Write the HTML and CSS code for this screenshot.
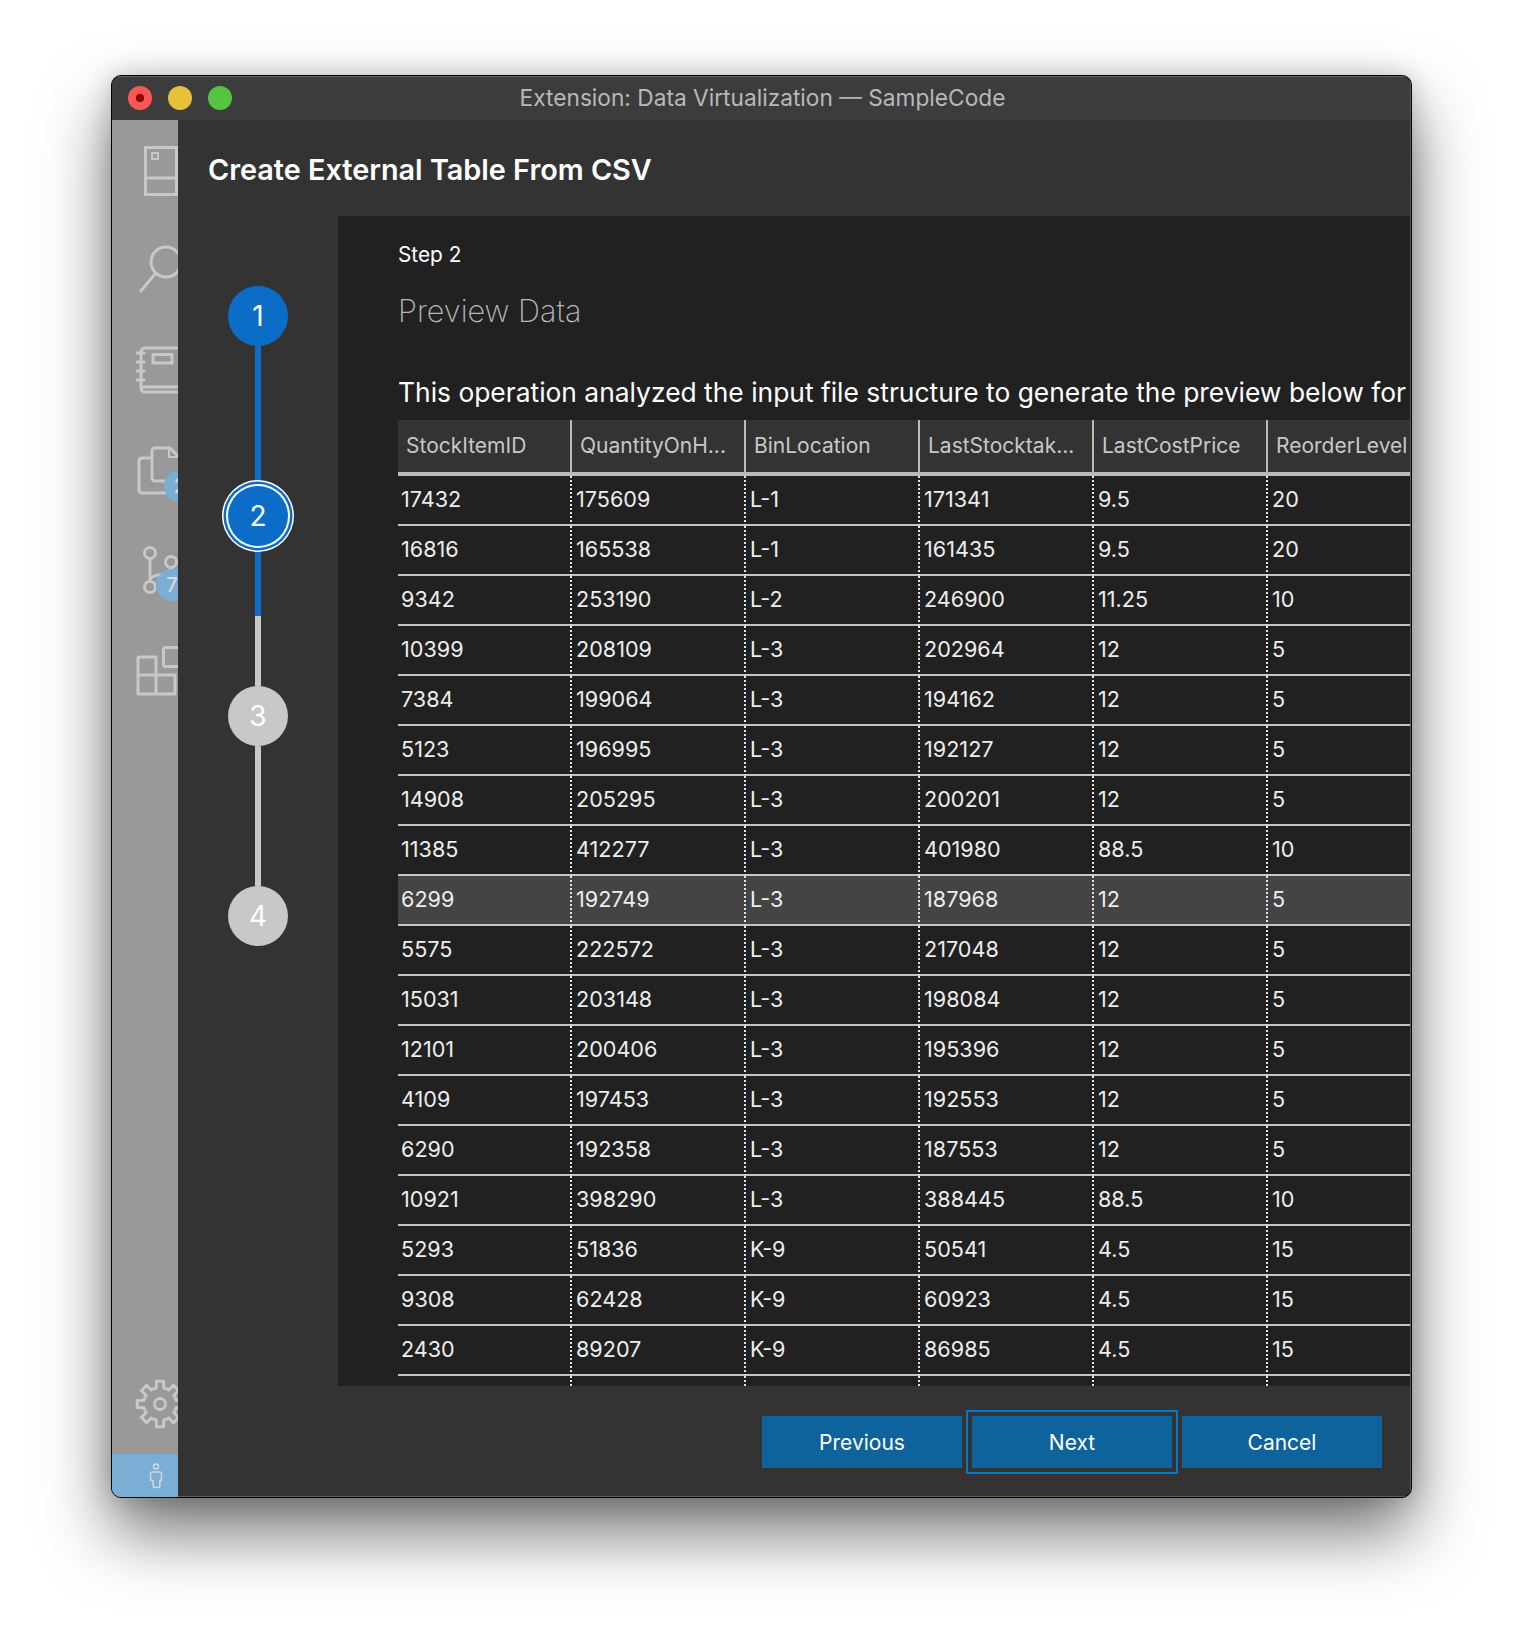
FILE: index.html
```html
<!DOCTYPE html>
<html lang="en">
<head>
  <meta charset="UTF-8">
  <title>Extension: Data Virtualization — SampleCode</title>
  <link rel="stylesheet" href="styles.css">
</head>
<body>
  <div class="window">
    <div class="titlebar">
      <div class="lights">
        <span class="light red"></span>
        <span class="light yellow"></span>
        <span class="light green"></span>
      </div>
      <div class="title">Extension: Data Virtualization — SampleCode</div>
    </div>
    <div class="app">
      <div class="activity">
        <div class="slot">
          <svg class="icon" width="66" height="100" viewBox="0 0 66 100">
            <rect x="33.5" y="27.5" width="31" height="47"/>
            <path d="M33.5 58h31"/>
            <rect x="40" y="33" width="6" height="6" stroke-width="2"/>
          </svg>
        </div>
        <div class="slot">
          <svg class="icon" width="66" height="100" viewBox="0 0 66 100">
            <circle cx="54" cy="42" r="15"/>
            <path d="M43 54 L28 72"/>
          </svg>
        </div>
        <div class="slot">
          <svg class="icon" width="66" height="100" viewBox="0 0 66 100">
            <path d="M80 28H33a4 4 0 0 0-4 4v36a4 4 0 0 0 4 4h47"/>
            <path d="M25 33h7M25 42h7M25 51h7M25 60h7" stroke-linecap="round"/>
            <rect x="41" y="34.500" width="19" height="8.500"/>
            <path d="M30 67h50"/>
          </svg>
        </div>
        <div class="slot badged">
          <svg class="icon" width="66" height="100" viewBox="0 0 66 100">
            <path d="M40 38H30a3 3 0 0 0-3 3v29a3 3 0 0 0 3 3h33"/>
            <path d="M68 61H43a3 3 0 0 1-3-3V31a3 3 0 0 1 3-3h15l9 9"/>
            <path d="M57 28v9h10" stroke-width="2"/>
          </svg>
          <span class="badge badge-files">2</span>
        </div>
        <div class="slot badged">
          <svg class="icon" width="66" height="100" viewBox="0 0 66 100">
            <circle cx="38" cy="33" r="5.5"/>
            <circle cx="38" cy="67" r="5.5"/>
            <circle cx="59" cy="42" r="5.5"/>
            <path d="M38 39v22M59 48c0 7-6 6-13 7-4 .5-8 2-8 6"/>
          </svg>
          <span class="badge badge-git">7</span>
        </div>
        <div class="slot">
          <svg class="icon" width="66" height="100" viewBox="0 0 66 100">
            <path d="M27 37h17v37H27a1 1 0 0 1-1-1V38a1 1 0 0 1 1-1zM26 55h37v18a1 1 0 0 1-1 1H44"/>
            <rect x="51.500" y="27.500" width="24" height="19" rx="2"/>
          </svg>
        </div>
        <div class="activity-bottom">
          <div class="slot">
            <svg class="icon" width="66" height="100" viewBox="0 0 66 100">
              <g transform="translate(48 50)">
                <path id="tooth" d="M-6.3-15.2L-3.7-16.100L-3.600-22.700H3.600L3.700-16.100L6.300-15.200"/>
                <use href="#tooth" transform="rotate(45)"/>
                <use href="#tooth" transform="rotate(90)"/>
                <use href="#tooth" transform="rotate(135)"/>
                <use href="#tooth" transform="rotate(180)"/>
                <use href="#tooth" transform="rotate(225)"/>
                <use href="#tooth" transform="rotate(270)"/>
                <use href="#tooth" transform="rotate(315)"/>
                <circle r="5.500"/>
              </g>
            </svg>
          </div>
          <div class="status">
            <svg class="person" width="14" height="26" viewBox="0 0 14 26">
              <circle cx="7" cy="3.500" r="2.500"/>
              <path d="M3 9h8a1.500 1.500 0 0 1 1.500 1.500V17l-1.700 1v5a1.500 1.500 0 0 1-1.500 1.500h-3.600a1.500 1.500 0 0 1-1.500-1.500v-5L1.500 17v-6.500A1.500 1.500 0 0 1 3 9z"/>
            </svg>
          </div>
        </div>
      </div>

      <div class="dialog">
        <div class="dialog-head">Create External Table From CSV</div>
        <div class="dialog-body">
          <div class="steps">
            <div class="step done">1</div>
            <div class="line blue"></div>
            <div class="step current">2</div>
            <div class="line half"></div>
            <div class="step">3</div>
            <div class="line"></div>
            <div class="step">4</div>
          </div>
          <div class="page">
            <div class="step-label">Step 2</div>
            <div class="page-title">Preview Data</div>
            <div class="intro">This operation analyzed the input file structure to generate the preview below for</div>
            <table class="grid">
              <thead>
                <tr><th>StockItemID</th><th>QuantityOnH...</th><th>BinLocation</th><th>LastStocktak...</th><th>LastCostPrice</th><th>ReorderLevel</th></tr>
              </thead>
              <tbody>
                <tr><td>17432</td><td>175609</td><td>L-1</td><td>171341</td><td>9.5</td><td>20</td></tr>
                <tr><td>16816</td><td>165538</td><td>L-1</td><td>161435</td><td>9.5</td><td>20</td></tr>
                <tr><td>9342</td><td>253190</td><td>L-2</td><td>246900</td><td>11.25</td><td>10</td></tr>
                <tr><td>10399</td><td>208109</td><td>L-3</td><td>202964</td><td>12</td><td>5</td></tr>
                <tr><td>7384</td><td>199064</td><td>L-3</td><td>194162</td><td>12</td><td>5</td></tr>
                <tr><td>5123</td><td>196995</td><td>L-3</td><td>192127</td><td>12</td><td>5</td></tr>
                <tr><td>14908</td><td>205295</td><td>L-3</td><td>200201</td><td>12</td><td>5</td></tr>
                <tr><td>11385</td><td>412277</td><td>L-3</td><td>401980</td><td>88.5</td><td>10</td></tr>
                <tr class="hover"><td>6299</td><td>192749</td><td>L-3</td><td>187968</td><td>12</td><td>5</td></tr>
                <tr><td>5575</td><td>222572</td><td>L-3</td><td>217048</td><td>12</td><td>5</td></tr>
                <tr><td>15031</td><td>203148</td><td>L-3</td><td>198084</td><td>12</td><td>5</td></tr>
                <tr><td>12101</td><td>200406</td><td>L-3</td><td>195396</td><td>12</td><td>5</td></tr>
                <tr><td>4109</td><td>197453</td><td>L-3</td><td>192553</td><td>12</td><td>5</td></tr>
                <tr><td>6290</td><td>192358</td><td>L-3</td><td>187553</td><td>12</td><td>5</td></tr>
                <tr><td>10921</td><td>398290</td><td>L-3</td><td>388445</td><td>88.5</td><td>10</td></tr>
                <tr><td>5293</td><td>51836</td><td>K-9</td><td>50541</td><td>4.5</td><td>15</td></tr>
                <tr><td>9308</td><td>62428</td><td>K-9</td><td>60923</td><td>4.5</td><td>15</td></tr>
                <tr><td>2430</td><td>89207</td><td>K-9</td><td>86985</td><td>4.5</td><td>15</td></tr>
                <tr><td></td><td></td><td></td><td></td><td></td><td></td></tr>
              </tbody>
            </table>
          </div>
        </div>
        <div class="dialog-foot">
          <button class="btn">Previous</button>
          <button class="btn focused">Next</button>
          <button class="btn">Cancel</button>
        </div>
      </div>
    </div>
  </div>
</body>
</html>
```

FILE: styles.css
```css
html, body {
  margin: 0;
  background: #fff;
}
body {
  height: 1646px;
  padding: 75px 0 0 111px;
  box-sizing: border-box;
  overflow: hidden;
  font-family: Inter, "Noto Sans", sans-serif;
}
.window {
  width: 1301px;
  height: 1423px;
  box-sizing: border-box;
  border: 1px solid #000;
  border-radius: 10px;
  background: #3c3c3c;
  overflow: hidden;
  display: flex;
  flex-direction: column;
  box-shadow: 0 34px 68px rgba(0, 0, 0, .56), 0 0 26px rgba(0, 0, 0, .18);
}
.titlebar {
  height: 44px;
  flex: none;
  position: relative;
  display: flex;
  align-items: center;
  justify-content: center;
  background: #3c3c3c;
  border-top: 1px solid #666;
  border-right: 1px solid #5c5c5c;
  box-sizing: border-box;
}
.lights {
  position: absolute;
  left: 16px;
  top: 9px;
  display: flex;
  gap: 16px;
}
.light {
  width: 24px;
  height: 24px;
  border-radius: 50%;
  display: block;
}
.red {
  background: radial-gradient(circle, #8b0a05 0 4px, #fc5753 4.5px);
}
.yellow {
  background: #e5c03b;
}
.green {
  background: #55c43e;
}
.title {
  color: #b8b8b8;
  font-size: 22.7px;
  margin: -2px 0 0 3px;
}
.app {
  flex: 1;
  display: flex;
  min-height: 0;
}

/* activity bar, dimmed behind the dialog */
.activity {
  width: 66px;
  flex: none;
  background: #999;
  display: flex;
  flex-direction: column;
  overflow: hidden;
}
.slot {
  height: 100px;
  flex: none;
  position: relative;
}
.icon {
  display: block;
  fill: none;
  stroke: #c8c8c8;
  stroke-width: 3;
}
.badge {
  position: absolute;
  width: 32px;
  height: 32px;
  border-radius: 50%;
  background: #7aaed4;
  color: #d8d8d8;
  font-size: 20px;
  font-weight: 500;
  line-height: 32px;
  text-align: center;
}
.badge-files {
  left: 52px;
  top: 50px;
}
.badge-git {
  left: 44px;
  top: 49px;
}
.activity-bottom {
  margin-top: auto;
}
.status {
  height: 43px;
  background: #7aaed4;
  display: flex;
  align-items: center;
  padding-left: 37px;
  box-sizing: border-box;
}
.person {
  fill: none;
  stroke: #d0d8de;
  stroke-width: 1.500;
}

.dialog {
  flex: 1;
  min-width: 0;
  display: flex;
  flex-direction: column;
  background: #333;
  border-right: 1px solid #5c5c5c;
  border-bottom: 1px solid #5c5c5c;
}
.dialog-head {
  height: 96px;
  flex: none;
  box-sizing: border-box;
  padding: 2px 28px 0 30px;
  display: flex;
  align-items: center;
  color: #fff;
  font-size: 28.8px;
  font-weight: 600;
}
.dialog-body {
  flex: 1;
  min-height: 0;
  display: flex;
}
.steps {
  width: 160px;
  flex: none;
  box-sizing: border-box;
  padding-top: 70px;
  display: flex;
  flex-direction: column;
  align-items: center;
}
.step {
  width: 60px;
  height: 60px;
  flex: none;
  border-radius: 50%;
  background: #c8c8c8;
  color: #fff;
  font-size: 28px;
  line-height: 60px;
  text-align: center;
}
.done {
  background: #0c6dc8;
}
.current {
  background: #0c6dc8;
  position: relative;
  box-shadow: 0 0 0 2px #fff, 0 0 0 4.5px #0c6dc8, 0 0 0 6px #fff;
}
.line {
  width: 6px;
  height: 140px;
  flex: none;
  background: #c8c8c8;
}
.blue {
  background: #0c6dc8;
}
.half {
  background: linear-gradient(#0c6dc8 0 70px, #c8c8c8 70px);
}
.page {
  flex: 1;
  min-width: 0;
  background: #212121;
  padding-left: 60px;
  overflow: hidden;
}
.step-label {
  margin-top: 27px;
  color: #fff;
  font-size: 20.8px;
  line-height: 24px;
}
.page-title {
  margin-top: 24px;
  color: #b8b8b8;
  font-size: 30.6px;
  font-weight: 200;
  line-height: 40px;
}
.intro {
  margin-top: 43px;
  color: #fff;
  font-size: 26.4px;
  line-height: 36px;
  white-space: nowrap;
  height: 36px;
}
.grid {
  margin-top: 10px;
  border-collapse: separate;
  border-spacing: 0;
  table-layout: fixed;
  width: 1044px;
}
.grid th,
.grid td {
  width: 174px;
  box-sizing: border-box;
  text-align: left;
  white-space: nowrap;
  overflow: hidden;
  font-weight: 400;
}
.grid th {
  height: 56px;
  padding: 0 8px 2px;
  background: #333;
  color: #c8c8c8;
  font-size: 21px;
  border-bottom: 4px solid #bbb;
  border-right: 2px solid #bbb;
}
.grid td {
  height: 50px;
  padding: 0 3px 3px;
  color: #eee;
  font-size: 21.6px;
  border-bottom: 2px solid #c4c4c4;
  border-right: 2px dotted #e4e4e4;
}
.grid td + td {
  padding-left: 4px;
}
.hover td {
  background: #444;
}
.dialog-foot {
  height: 110px;
  flex: none;
  box-sizing: border-box;
  padding: 30px 28px 0 0;
  display: flex;
  justify-content: flex-end;
  gap: 10px;
}
.btn {
  width: 200px;
  height: 52px;
  border: 0;
  padding: 0;
  background: #0e639c;
  color: #fff;
  font-family: inherit;
  font-size: 21px;
}
.focused {
  outline: 2px solid #007acc;
  outline-offset: 4px;
}
```
